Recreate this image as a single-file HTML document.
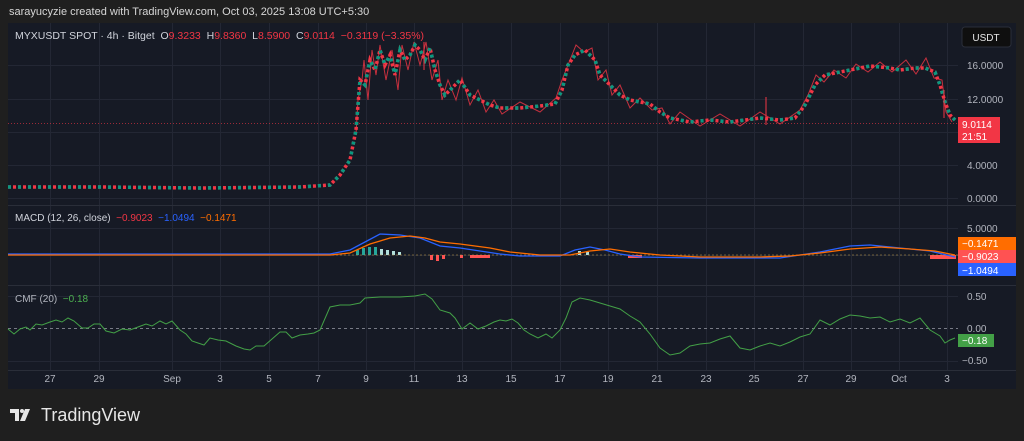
<!DOCTYPE html>
<html><head><meta charset="utf-8"><style>
html,body{margin:0;padding:0;background:#1f1f1f;width:1024px;height:441px;overflow:hidden;font-family:"Liberation Sans",sans-serif}
svg text{font-family:"Liberation Sans",sans-serif;white-space:pre}
</style></head><body>
<svg width="1024" height="441" xmlns="http://www.w3.org/2000/svg">
<rect width="1024" height="441" fill="#1f1f1f"/>
<text x="9" y="15" fill="#d6d6d6" font-size="11">sarayucyzie created with TradingView.com, Oct 03, 2025 13:08 UTC+5:30</text>
<rect x="8" y="23" width="1008" height="366" fill="#161a25"/>
<g stroke="#232734" stroke-width="1">
<line x1="8" y1="65.5" x2="958" y2="65.5"/><line x1="8" y1="99.5" x2="958" y2="99.5"/><line x1="8" y1="132.5" x2="958" y2="132.5"/><line x1="8" y1="165.5" x2="958" y2="165.5"/><line x1="8" y1="198.5" x2="958" y2="198.5"/>
<line x1="8" y1="228.5" x2="958" y2="228.5"/><line x1="8" y1="255.5" x2="958" y2="255.5"/>
<line x1="8" y1="296.5" x2="958" y2="296.5"/><line x1="8" y1="361.5" x2="958" y2="361.5"/>
<line x1="50.5" y1="23" x2="50.5" y2="370"/><line x1="99.5" y1="23" x2="99.5" y2="370"/><line x1="172.5" y1="23" x2="172.5" y2="370"/><line x1="220.5" y1="23" x2="220.5" y2="370"/><line x1="269.5" y1="23" x2="269.5" y2="370"/><line x1="318.5" y1="23" x2="318.5" y2="370"/><line x1="366.5" y1="23" x2="366.5" y2="370"/><line x1="414.5" y1="23" x2="414.5" y2="370"/><line x1="462.5" y1="23" x2="462.5" y2="370"/><line x1="511.5" y1="23" x2="511.5" y2="370"/><line x1="560.5" y1="23" x2="560.5" y2="370"/><line x1="608.5" y1="23" x2="608.5" y2="370"/><line x1="657.5" y1="23" x2="657.5" y2="370"/><line x1="706.5" y1="23" x2="706.5" y2="370"/><line x1="754.5" y1="23" x2="754.5" y2="370"/><line x1="803.5" y1="23" x2="803.5" y2="370"/><line x1="851.5" y1="23" x2="851.5" y2="370"/><line x1="899.5" y1="23" x2="899.5" y2="370"/><line x1="947.5" y1="23" x2="947.5" y2="370"/>
</g>
<line x1="8" y1="205.5" x2="1016" y2="205.5" stroke="#2a2e39"/>
<line x1="8" y1="285.5" x2="1016" y2="285.5" stroke="#2a2e39"/>
<line x1="8" y1="370.5" x2="1016" y2="370.5" stroke="#2a2e39"/>
<line x1="8" y1="123.5" x2="958" y2="123.5" stroke="#f23645" stroke-dasharray="1 2" opacity="0.6"/>
<!-- price candles approx -->
<g fill="none">
<polyline stroke="#f23645" stroke-width="1" opacity="0.8" points="356,135 358,100 362,80 364,60 368,100 372,50 376,75 380,45 386,80 392,50 398,90 402,45 408,70 414,42 420,65 426,42 432,80 438,60 442,100 448,80 456,100 462,78 470,105 478,90 486,112 494,100 502,114 520,102 540,112 556,98 562,80 570,60 576,45 584,52 592,48 598,80 606,70 612,95 620,85 630,108 640,98 652,110 662,108 670,124 680,112 700,126 720,114 740,126 760,112 780,124 800,110 808,95 816,75 824,82 834,70 846,78 856,64 868,72 880,62 892,72 906,60 916,74 926,58 934,78 942,80 946,112 952,122"/>
<polyline id="p" stroke-width="3.5" points="8,187 100,187 200,188 300,187 330,185 340,175 350,160 356,130 360,80 365,85 370,60 375,70 380,50 385,65 390,55 395,75 400,50 405,60 410,55 415,45 420,50 425,60 430,48 435,70 440,85 445,95 450,90 460,80 470,95 480,100 490,105 500,108 520,108 540,106 555,104 562,90 568,65 575,55 585,50 595,60 600,75 610,85 620,95 630,100 650,104 660,112 670,118 690,122 710,120 730,122 760,118 780,120 795,118 805,105 815,85 825,75 840,72 850,70 870,66 890,68 900,70 915,68 925,68 935,72 940,85 945,102 950,115 955,120"
 stroke="#f23645" stroke-dasharray="3 2"/>
<polyline stroke-width="3.5" points="8,187 100,187 200,188 300,187 330,185 340,175 350,160 356,130 360,80 365,85 370,60 375,70 380,50 385,65 390,55 395,75 400,50 405,60 410,55 415,45 420,50 425,60 430,48 435,70 440,85 445,95 450,90 460,80 470,95 480,100 490,105 500,108 520,108 540,106 555,104 562,90 568,65 575,55 585,50 595,60 600,75 610,85 620,95 630,100 650,104 660,112 670,118 690,122 710,120 730,122 760,118 780,120 795,118 805,105 815,85 825,75 840,72 850,70 870,66 890,68 900,70 915,68 925,68 935,72 940,85 945,102 950,115 955,120"
 stroke="#089981" stroke-dasharray="3 7"/>
</g>
<g stroke="#f23645" stroke-width="1"><line x1="424" y1="42" x2="424" y2="70"/><line x1="766" y1="97" x2="766" y2="125"/><line x1="944" y1="90" x2="944" y2="118"/></g>
<text x="15" y="39" font-size="10.5" fill="#d1d4dc">MYXUSDT SPOT · 4h · Bitget  O<tspan fill="#f23645">9.3233</tspan>  H<tspan fill="#f23645">9.8360</tspan>  L<tspan fill="#f23645">8.5900</tspan>  C<tspan fill="#f23645">9.0114</tspan>  <tspan fill="#f23645">−0.3119 (−3.35%)</tspan></text>
<rect x="962" y="27" width="49" height="20" rx="3" fill="#0f0f0f" stroke="#2a2e39"/>
<text x="986" y="41" font-size="10" fill="#e6e6e6" text-anchor="middle">USDT</text>
<g font-size="10" fill="#b2b5be">
<text x="967" y="69">16.0000</text><text x="967" y="103">12.0000</text><text x="967" y="169">4.0000</text><text x="967" y="202">0.0000</text>
<text x="967" y="232">5.0000</text>
<text x="967" y="300">0.50</text><text x="967" y="332">0.00</text><text x="962" y="364">−0.50</text>
</g>
<rect x="958" y="117" width="42" height="26" fill="#f23645"/>
<text x="962" y="128" font-size="10" fill="#fff">9.0114</text><text x="962" y="140" font-size="10" fill="#fff">21:51</text>
<!-- MACD -->
<text x="15" y="221" font-size="10" fill="#d1d4dc">MACD (12, 26, close)  <tspan fill="#f23645">−0.9023</tspan>  <tspan fill="#2962ff">−1.0494</tspan>  <tspan fill="#ff6d00">−0.1471</tspan></text>
<g fill="#26a69a"><rect x="356" y="250" width="3" height="5"/><rect x="362" y="248" width="3" height="7"/><rect x="368" y="247" width="3" height="8"/><rect x="374" y="247" width="3" height="8"/></g>
<g fill="#b2dfdb"><rect x="380" y="249" width="3" height="6"/><rect x="386" y="250" width="3" height="5"/><rect x="392" y="251" width="3" height="4"/><rect x="398" y="252" width="3" height="3"/><rect x="578" y="251" width="3" height="4"/><rect x="586" y="252" width="3" height="3"/></g>
<g fill="#ff5252"><rect x="430" y="255" width="3" height="5"/><rect x="436" y="255" width="3" height="6"/><rect x="442" y="255" width="3" height="4"/><rect x="460" y="255" width="3" height="3"/><rect x="470" y="255" width="20" height="3"/><rect x="628" y="255" width="14" height="3"/><rect x="930" y="255" width="26" height="4"/></g>
<line x1="8" y1="255" x2="958" y2="255" stroke="#c9a14a" stroke-dasharray="2 2" opacity="0.5"/>
<polyline fill="none" stroke="#2962ff" stroke-width="1.3" points="8,254 330,254 350,250 365,242 380,234 400,235 420,238 440,246 460,248 480,251 500,254 520,256 560,256 575,250 590,247 605,250 620,254 640,257 700,258 780,258 800,255 820,252 850,246 870,245 900,248 930,251 955,257"/>
<polyline fill="none" stroke="#ff6d00" stroke-width="1.3" points="8,255 330,255 350,253 370,244 390,238 410,236 425,238 440,242 460,244 490,248 510,252 540,255 570,255 590,251 610,249 630,252 660,255 700,257 760,257 790,256 820,253 850,249 880,247 910,249 935,251 955,255"/>
<rect x="958" y="237" width="58" height="13" fill="#ff6d00"/><text x="962" y="247" font-size="10" fill="#fff">−0.1471</text>
<rect x="958" y="250" width="58" height="13" fill="#ff5252"/><text x="962" y="260" font-size="10" fill="#fff">−0.9023</text>
<rect x="958" y="263" width="58" height="13" fill="#2962ff"/><text x="962" y="274" font-size="10" fill="#fff">−1.0494</text>
<!-- CMF -->
<text x="15" y="302" font-size="10" fill="#b2b5be">CMF (20)  <tspan fill="#4caf50">−0.18</tspan></text>
<line x1="8" y1="328.5" x2="958" y2="328.5" stroke="#787b86" stroke-dasharray="3 3"/>
<polyline fill="none" stroke="#43a047" stroke-width="1" points="8,329 14,334 20,329 26,327 30,330 36,324 42,325 50,322 56,320 62,322 68,318 74,321 82,328 88,328 94,324 100,324 106,331 114,333 122,329 130,330 138,327 146,324 152,326 160,321 166,324 172,321 180,330 186,334 192,341 198,343 204,345 210,338 218,340 226,341 236,346 244,349 250,350 256,346 264,346 272,339 280,332 286,332 292,338 300,335 308,334 314,333 320,330 330,307 340,305 350,305 360,303 365,298 380,297 400,297 415,296 425,294 432,299 440,310 450,313 455,318 462,329 470,323 478,329 486,326 494,322 500,320 506,321 512,319 518,323 524,330 530,334 538,338 546,334 552,338 560,330 566,318 572,302 580,298 590,300 600,303 610,306 620,309 630,316 640,322 650,334 660,348 670,355 680,353 690,346 700,344 710,343 720,339 730,336 740,348 750,350 760,346 770,343 780,346 790,342 800,337 810,334 820,320 830,325 840,319 850,315 860,316 870,318 880,317 890,322 900,319 910,323 920,318 930,330 940,336 945,343 950,340 955,338"/>
<rect x="958" y="334" width="36" height="13" fill="#43a047"/><text x="962" y="344" font-size="10" fill="#fff">−0.18</text>
<g font-size="10" fill="#b2b5be" text-anchor="middle">
<text x="50" y="382">27</text><text x="99" y="382">29</text><text x="172" y="382">Sep</text><text x="220" y="382">3</text><text x="269" y="382">5</text><text x="318" y="382">7</text><text x="366" y="382">9</text><text x="414" y="382">11</text><text x="462" y="382">13</text><text x="511" y="382">15</text><text x="560" y="382">17</text><text x="608" y="382">19</text><text x="657" y="382">21</text><text x="706" y="382">23</text><text x="754" y="382">25</text><text x="803" y="382">27</text><text x="851" y="382">29</text><text x="899" y="382">Oct</text><text x="947" y="382">3</text>
</g>
<!-- logo -->
<g fill="#e6e6e6"><path d="M10 409h9v12h-4v-8h-5z"/><circle cx="22" cy="411" r="2"/><path d="M25 409h5l-5 12h-5z"/></g>
<text x="41" y="421" font-size="18" fill="#e6e6e6">TradingView</text>
</svg>
</body></html>
